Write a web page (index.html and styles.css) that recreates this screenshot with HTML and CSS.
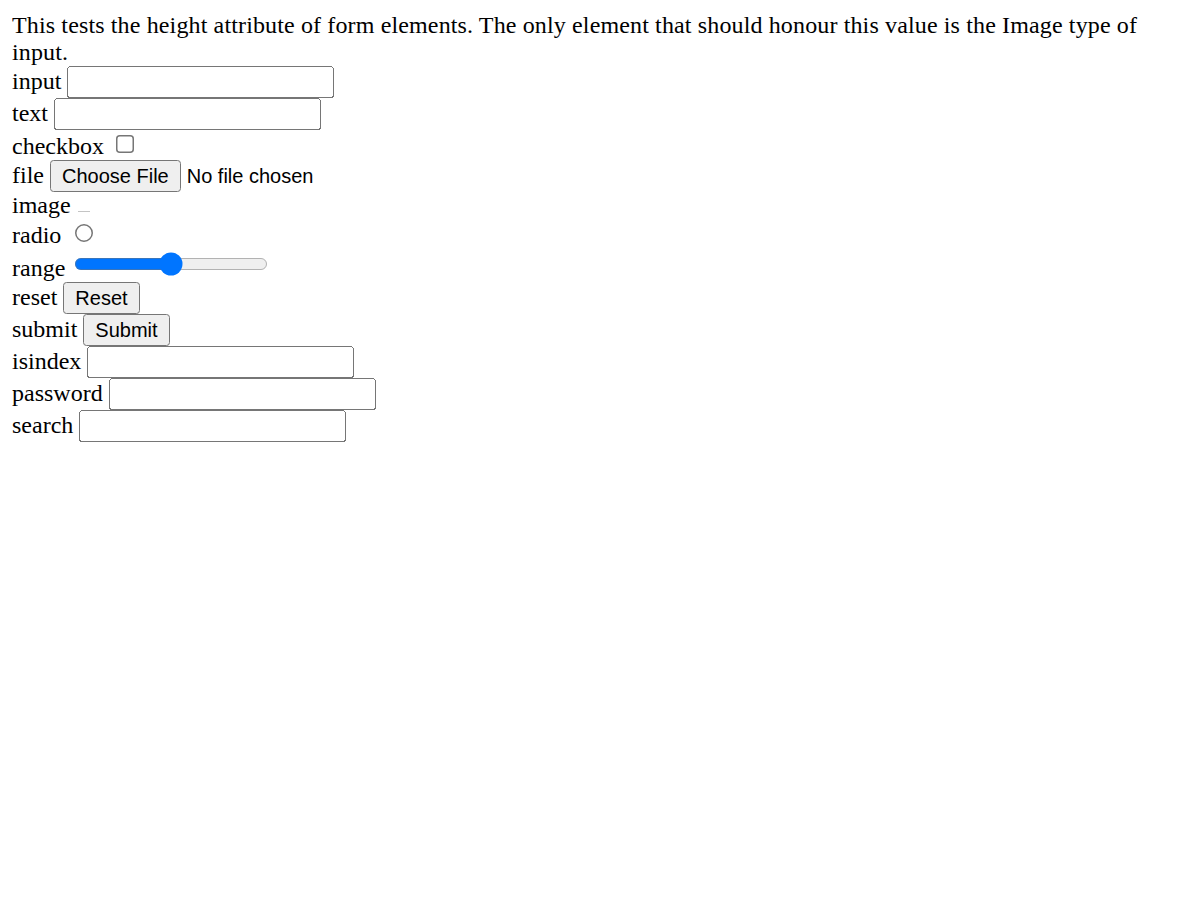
FILE: index.html
```html
<!DOCTYPE html>
<html>
<head>
<meta charset="utf-8">
<link rel="stylesheet" href="styles.css">
</head>
<body class="page">
<span class="intro">This tests the height attribute of form elements. The only element that should honour this value is the Image type of input.</span><br>
input <input class="ctl box" height="10"><br>
text <input class="ctl box" type="text" height="10"><br>
checkbox <input class="ctl" type="checkbox" height="10"><br>
file <input class="ctl" type="file" height="10"><br>
image <span class="img-stub"></span><br>
radio <input class="ctl" type="radio" height="10"><br>
range <input class="ctl" type="range" height="10"><br>
reset <input class="ctl" type="reset" height="10"><br>
submit <input class="ctl" type="submit" height="10"><br>
isindex <input class="ctl box" type="text" height="10"><br>
password <input class="ctl box" type="password" height="10"><br>
search <input class="ctl box" type="search" height="10"><br>
</body>
</html>
```

FILE: styles.css
```css
.page {
  zoom: 1.5;
  font-family: "Liberation Serif", serif;
  font-size: 16px;
}
.intro {
  letter-spacing: 0.09px;
}
.ctl {
  font-family: "Liberation Sans", Arial, sans-serif;
}
.box {
  box-sizing: border-box;
  width: 178px;
}
.img-stub {
  display: inline-block;
  width: 8px;
  height: 0;
  margin-left: 1px;
  border-top: 1px solid #c4c4c4;
  vertical-align: baseline;
  margin-bottom: 1px;
}
```
